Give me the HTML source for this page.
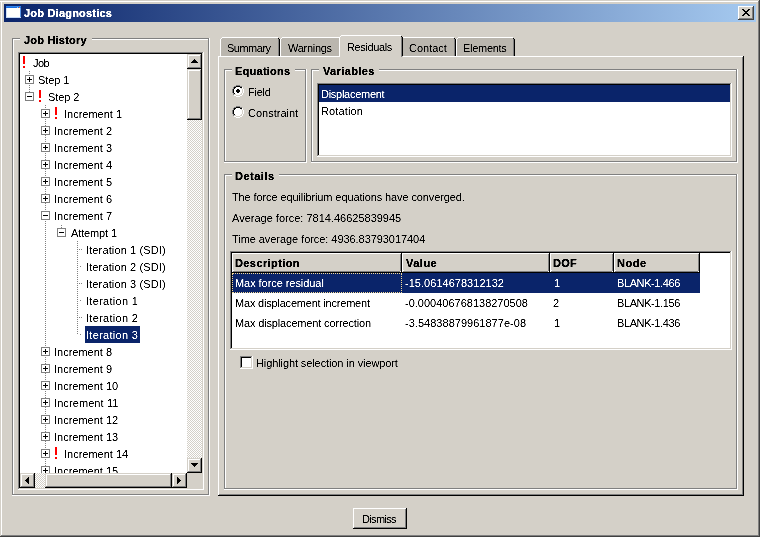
<!DOCTYPE html>
<html><head><meta charset="utf-8"><title>Job Diagnostics</title>
<style>
html,body{margin:0;padding:0}
body{width:760px;height:537px;background:#d4d0c8;position:relative;overflow:hidden;
 font-family:"Liberation Sans",sans-serif;font-size:11px;color:#000}
i,svg,.t,.clip{position:absolute;display:block}
.clip{overflow:hidden}
.t{white-space:nowrap;line-height:13px;height:13px;font-style:normal;filter:url(#tb)}
.dv{width:1px;background-image:linear-gradient(to bottom,#808080 50%,transparent 50%);background-size:1px 2px}
.dh{height:1px;background-image:linear-gradient(to right,#808080 50%,transparent 50%);background-size:2px 1px}
.focus{border:1px dotted #f5db95;box-sizing:content-box}
</style></head>
<body>
<svg width="0" height="0" style="left:0;top:0"><defs><pattern id="dz" width="2" height="2" patternUnits="userSpaceOnUse"><rect width="2" height="2" fill="#fff"/><rect width="1" height="1" fill="#d4d0c8"/><rect x="1" y="1" width="1" height="1" fill="#d4d0c8"/></pattern><filter id="tb" x="-2%" y="-10%" width="104%" height="120%" color-interpolation-filters="sRGB"><feComponentTransfer><feFuncA type="linear" slope="2" intercept="-0.45"/></feComponentTransfer></filter><filter id="tc" x="-2%" y="-10%" width="104%" height="120%" color-interpolation-filters="sRGB"><feComponentTransfer><feFuncA type="linear" slope="2.2" intercept="-0.2"/></feComponentTransfer></filter></defs></svg>
<i style="left:0px;top:1px;width:760px;height:1px;background:#ffffff;"></i>
<i style="left:1px;top:1px;width:1px;height:535px;background:#ffffff;"></i>
<i style="left:0px;top:536px;width:760px;height:1px;background:#404040;"></i>
<i style="left:759px;top:0px;width:1px;height:537px;background:#404040;"></i>
<i style="left:1px;top:535px;width:758px;height:1px;background:#808080;"></i>
<i style="left:758px;top:1px;width:1px;height:535px;background:#808080;"></i>
<i style="left:4px;top:4px;width:752px;height:18px;background:;background:linear-gradient(to right,#0a246a,#a6caf0);"></i>
<svg style="left:6px;top:6px" width="15" height="12" viewBox="0 0 15 12" shape-rendering="crispEdges"><rect width="15" height="12" fill="#fffffb"/><rect width="15" height="2" fill="#1b6ee0"/><rect width="15" height="1" fill="#2f86f0"/><rect x="13" y="1" width="1" height="1" fill="#e8703a"/><rect x="11" y="1" width="1" height="1" fill="#9cc4f4"/><rect x="0" y="2" width="1" height="10" fill="#cfe0f8"/><rect x="14" y="2" width="1" height="10" fill="#5a96e6"/><rect x="0" y="11" width="15" height="1" fill="#c8dcf6"/></svg>
<span class="t" style="left:24px;top:7px;font-weight:bold;filter:url(#tc);color:#fff;letter-spacing:0.214px;">Job Diagnostics</span>
<i style="left:738px;top:6px;width:16px;height:14px;background:#d4d0c8;"></i>
<i style="left:738px;top:6px;width:16px;height:1px;background:#ffffff;"></i>
<i style="left:738px;top:6px;width:1px;height:14px;background:#ffffff;"></i>
<i style="left:738px;top:19px;width:16px;height:1px;background:#404040;"></i>
<i style="left:753px;top:6px;width:1px;height:14px;background:#404040;"></i>
<i style="left:739px;top:18px;width:14px;height:1px;background:#808080;"></i>
<i style="left:752px;top:7px;width:1px;height:12px;background:#808080;"></i>
<svg style="left:742px;top:9px" width="8" height="7" viewBox="0 0 8 7" shape-rendering="crispEdges"><path d="M0 0h2v1h-2zM6 0h2v1h-2zM1 1h2v1h-2zM5 1h2v1h-2zM2 2h4v1h-4zM3 3h2v1h-2zM2 4h4v1h-4zM1 5h2v1h-2zM5 5h2v1h-2zM0 6h2v1h-2zM6 6h2v1h-2z" fill="#000"/></svg>
<i style="left:12px;top:38px;width:198px;height:1px;background:#808080;"></i>
<i style="left:12px;top:38px;width:1px;height:458px;background:#808080;"></i>
<i style="left:12px;top:495px;width:198px;height:1px;background:#ffffff;"></i>
<i style="left:209px;top:38px;width:1px;height:458px;background:#ffffff;"></i>
<i style="left:13px;top:494px;width:196px;height:1px;background:#808080;"></i>
<i style="left:208px;top:39px;width:1px;height:456px;background:#808080;"></i>
<i style="left:13px;top:39px;width:195px;height:1px;background:#ffffff;"></i>
<i style="left:13px;top:39px;width:1px;height:455px;background:#ffffff;"></i>
<i style="left:20px;top:38px;width:72px;height:2px;background:#d4d0c8;"></i>
<span class="t" style="left:24px;top:34px;font-weight:bold;filter:url(#tc);letter-spacing:0.200px;">Job History</span>
<i style="left:20px;top:54px;width:182px;height:434px;background:#ffffff;"></i>
<i style="left:18px;top:52px;width:185px;height:1px;background:#808080;"></i>
<i style="left:18px;top:52px;width:1px;height:437px;background:#808080;"></i>
<i style="left:18px;top:489px;width:186px;height:1px;background:#ffffff;"></i>
<i style="left:203px;top:52px;width:1px;height:438px;background:#ffffff;"></i>
<i style="left:19px;top:53px;width:183px;height:1px;background:#000000;"></i>
<i style="left:19px;top:53px;width:1px;height:435px;background:#000000;"></i>
<i style="left:19px;top:488px;width:184px;height:1px;background:#d4d0c8;"></i>
<i style="left:202px;top:53px;width:1px;height:436px;background:#d4d0c8;"></i>
<div class="clip" style="left:0;top:0;width:187px;height:473px">
<i class="dv" style="left:29px;top:71px;height:3px"></i>
<i class="dv" style="left:29px;top:85px;height:7px"></i>
<i class="dv" style="left:45px;top:105px;height:3px"></i>
<i class="dv" style="left:45px;top:119px;height:7px"></i>
<i class="dv" style="left:45px;top:135px;height:7px"></i>
<i class="dv" style="left:45px;top:153px;height:7px"></i>
<i class="dv" style="left:45px;top:169px;height:7px"></i>
<i class="dv" style="left:45px;top:187px;height:7px"></i>
<i class="dv" style="left:45px;top:203px;height:7px"></i>
<i class="dv" style="left:45px;top:221px;height:125px"></i>
<i class="dv" style="left:45px;top:357px;height:7px"></i>
<i class="dv" style="left:45px;top:373px;height:7px"></i>
<i class="dv" style="left:45px;top:391px;height:7px"></i>
<i class="dv" style="left:45px;top:407px;height:7px"></i>
<i class="dv" style="left:45px;top:425px;height:7px"></i>
<i class="dv" style="left:45px;top:441px;height:7px"></i>
<i class="dv" style="left:45px;top:459px;height:7px"></i>
<i class="dv" style="left:45px;top:475px;height:5px"></i>
<i class="dv" style="left:61px;top:225px;height:3px"></i>
<i class="dv" style="left:77px;top:241px;height:93px"></i>
<i class="dh" style="left:79px;top:249px;width:3px"></i>
<i class="dh" style="left:80px;top:266px;width:1px"></i>
<i class="dh" style="left:79px;top:283px;width:3px"></i>
<i class="dh" style="left:80px;top:300px;width:1px"></i>
<i class="dh" style="left:79px;top:317px;width:3px"></i>
<i class="dh" style="left:80px;top:334px;width:1px"></i>
<i style="left:23px;top:56px;width:2px;height:8px;background:#ff0000;"></i>
<i style="left:23px;top:66px;width:2px;height:2px;background:#ff0000;"></i>
<span class="t" style="left:33px;top:57px;letter-spacing:-0.500px;">Job</span>
<i style="left:25px;top:75px;width:9px;height:9px;background:#ffffff;"></i>
<i style="left:25px;top:75px;width:9px;height:1px;background:#808080;"></i>
<i style="left:25px;top:75px;width:1px;height:9px;background:#808080;"></i>
<i style="left:25px;top:83px;width:9px;height:1px;background:#808080;"></i>
<i style="left:33px;top:75px;width:1px;height:9px;background:#808080;"></i>
<i style="left:27px;top:79px;width:5px;height:1px;background:#000000;"></i>
<i style="left:29px;top:77px;width:1px;height:5px;background:#000000;"></i>
<span class="t" style="left:38px;top:74px;letter-spacing:-0.100px;">Step 1</span>
<i style="left:25px;top:92px;width:9px;height:9px;background:#ffffff;"></i>
<i style="left:25px;top:92px;width:9px;height:1px;background:#808080;"></i>
<i style="left:25px;top:92px;width:1px;height:9px;background:#808080;"></i>
<i style="left:25px;top:100px;width:9px;height:1px;background:#808080;"></i>
<i style="left:33px;top:92px;width:1px;height:9px;background:#808080;"></i>
<i style="left:27px;top:96px;width:5px;height:1px;background:#000000;"></i>
<i style="left:39px;top:90px;width:2px;height:8px;background:#ff0000;"></i>
<i style="left:39px;top:100px;width:2px;height:2px;background:#ff0000;"></i>
<span class="t" style="left:48px;top:91px;letter-spacing:-0.100px;">Step 2</span>
<i style="left:41px;top:109px;width:9px;height:9px;background:#ffffff;"></i>
<i style="left:41px;top:109px;width:9px;height:1px;background:#808080;"></i>
<i style="left:41px;top:109px;width:1px;height:9px;background:#808080;"></i>
<i style="left:41px;top:117px;width:9px;height:1px;background:#808080;"></i>
<i style="left:49px;top:109px;width:1px;height:9px;background:#808080;"></i>
<i style="left:43px;top:113px;width:5px;height:1px;background:#000000;"></i>
<i style="left:45px;top:111px;width:1px;height:5px;background:#000000;"></i>
<i style="left:55px;top:107px;width:2px;height:8px;background:#ff0000;"></i>
<i style="left:55px;top:117px;width:2px;height:2px;background:#ff0000;"></i>
<span class="t" style="left:64px;top:108px;">Increment 1</span>
<i style="left:41px;top:126px;width:9px;height:9px;background:#ffffff;"></i>
<i style="left:41px;top:126px;width:9px;height:1px;background:#808080;"></i>
<i style="left:41px;top:126px;width:1px;height:9px;background:#808080;"></i>
<i style="left:41px;top:134px;width:9px;height:1px;background:#808080;"></i>
<i style="left:49px;top:126px;width:1px;height:9px;background:#808080;"></i>
<i style="left:43px;top:130px;width:5px;height:1px;background:#000000;"></i>
<i style="left:45px;top:128px;width:1px;height:5px;background:#000000;"></i>
<span class="t" style="left:54px;top:125px;">Increment 2</span>
<i style="left:41px;top:143px;width:9px;height:9px;background:#ffffff;"></i>
<i style="left:41px;top:143px;width:9px;height:1px;background:#808080;"></i>
<i style="left:41px;top:143px;width:1px;height:9px;background:#808080;"></i>
<i style="left:41px;top:151px;width:9px;height:1px;background:#808080;"></i>
<i style="left:49px;top:143px;width:1px;height:9px;background:#808080;"></i>
<i style="left:43px;top:147px;width:5px;height:1px;background:#000000;"></i>
<i style="left:45px;top:145px;width:1px;height:5px;background:#000000;"></i>
<span class="t" style="left:54px;top:142px;">Increment 3</span>
<i style="left:41px;top:160px;width:9px;height:9px;background:#ffffff;"></i>
<i style="left:41px;top:160px;width:9px;height:1px;background:#808080;"></i>
<i style="left:41px;top:160px;width:1px;height:9px;background:#808080;"></i>
<i style="left:41px;top:168px;width:9px;height:1px;background:#808080;"></i>
<i style="left:49px;top:160px;width:1px;height:9px;background:#808080;"></i>
<i style="left:43px;top:164px;width:5px;height:1px;background:#000000;"></i>
<i style="left:45px;top:162px;width:1px;height:5px;background:#000000;"></i>
<span class="t" style="left:54px;top:159px;">Increment 4</span>
<i style="left:41px;top:177px;width:9px;height:9px;background:#ffffff;"></i>
<i style="left:41px;top:177px;width:9px;height:1px;background:#808080;"></i>
<i style="left:41px;top:177px;width:1px;height:9px;background:#808080;"></i>
<i style="left:41px;top:185px;width:9px;height:1px;background:#808080;"></i>
<i style="left:49px;top:177px;width:1px;height:9px;background:#808080;"></i>
<i style="left:43px;top:181px;width:5px;height:1px;background:#000000;"></i>
<i style="left:45px;top:179px;width:1px;height:5px;background:#000000;"></i>
<span class="t" style="left:54px;top:176px;">Increment 5</span>
<i style="left:41px;top:194px;width:9px;height:9px;background:#ffffff;"></i>
<i style="left:41px;top:194px;width:9px;height:1px;background:#808080;"></i>
<i style="left:41px;top:194px;width:1px;height:9px;background:#808080;"></i>
<i style="left:41px;top:202px;width:9px;height:1px;background:#808080;"></i>
<i style="left:49px;top:194px;width:1px;height:9px;background:#808080;"></i>
<i style="left:43px;top:198px;width:5px;height:1px;background:#000000;"></i>
<i style="left:45px;top:196px;width:1px;height:5px;background:#000000;"></i>
<span class="t" style="left:54px;top:193px;">Increment 6</span>
<i style="left:41px;top:211px;width:9px;height:9px;background:#ffffff;"></i>
<i style="left:41px;top:211px;width:9px;height:1px;background:#808080;"></i>
<i style="left:41px;top:211px;width:1px;height:9px;background:#808080;"></i>
<i style="left:41px;top:219px;width:9px;height:1px;background:#808080;"></i>
<i style="left:49px;top:211px;width:1px;height:9px;background:#808080;"></i>
<i style="left:43px;top:215px;width:5px;height:1px;background:#000000;"></i>
<span class="t" style="left:54px;top:210px;">Increment 7</span>
<i style="left:57px;top:228px;width:9px;height:9px;background:#ffffff;"></i>
<i style="left:57px;top:228px;width:9px;height:1px;background:#808080;"></i>
<i style="left:57px;top:228px;width:1px;height:9px;background:#808080;"></i>
<i style="left:57px;top:236px;width:9px;height:1px;background:#808080;"></i>
<i style="left:65px;top:228px;width:1px;height:9px;background:#808080;"></i>
<i style="left:59px;top:232px;width:5px;height:1px;background:#000000;"></i>
<span class="t" style="left:71px;top:227px;letter-spacing:-0.125px;">Attempt 1</span>
<span class="t" style="left:86px;top:244px;letter-spacing:0.125px;">Iteration 1 (SDI)</span>
<span class="t" style="left:86px;top:261px;letter-spacing:0.125px;">Iteration 2 (SDI)</span>
<span class="t" style="left:86px;top:278px;letter-spacing:0.125px;">Iteration 3 (SDI)</span>
<span class="t" style="left:86px;top:295px;letter-spacing:0.300px;">Iteration 1</span>
<span class="t" style="left:86px;top:312px;letter-spacing:0.300px;">Iteration 2</span>
<i style="left:85px;top:326px;width:55px;height:17px;background:#0a246a;"></i>
<span class="t" style="left:86px;top:329px;color:#fff;letter-spacing:0.300px;">Iteration 3</span>
<i style="left:41px;top:347px;width:9px;height:9px;background:#ffffff;"></i>
<i style="left:41px;top:347px;width:9px;height:1px;background:#808080;"></i>
<i style="left:41px;top:347px;width:1px;height:9px;background:#808080;"></i>
<i style="left:41px;top:355px;width:9px;height:1px;background:#808080;"></i>
<i style="left:49px;top:347px;width:1px;height:9px;background:#808080;"></i>
<i style="left:43px;top:351px;width:5px;height:1px;background:#000000;"></i>
<i style="left:45px;top:349px;width:1px;height:5px;background:#000000;"></i>
<span class="t" style="left:54px;top:346px;">Increment 8</span>
<i style="left:41px;top:364px;width:9px;height:9px;background:#ffffff;"></i>
<i style="left:41px;top:364px;width:9px;height:1px;background:#808080;"></i>
<i style="left:41px;top:364px;width:1px;height:9px;background:#808080;"></i>
<i style="left:41px;top:372px;width:9px;height:1px;background:#808080;"></i>
<i style="left:49px;top:364px;width:1px;height:9px;background:#808080;"></i>
<i style="left:43px;top:368px;width:5px;height:1px;background:#000000;"></i>
<i style="left:45px;top:366px;width:1px;height:5px;background:#000000;"></i>
<span class="t" style="left:54px;top:363px;">Increment 9</span>
<i style="left:41px;top:381px;width:9px;height:9px;background:#ffffff;"></i>
<i style="left:41px;top:381px;width:9px;height:1px;background:#808080;"></i>
<i style="left:41px;top:381px;width:1px;height:9px;background:#808080;"></i>
<i style="left:41px;top:389px;width:9px;height:1px;background:#808080;"></i>
<i style="left:49px;top:381px;width:1px;height:9px;background:#808080;"></i>
<i style="left:43px;top:385px;width:5px;height:1px;background:#000000;"></i>
<i style="left:45px;top:383px;width:1px;height:5px;background:#000000;"></i>
<span class="t" style="left:54px;top:380px;">Increment 10</span>
<i style="left:41px;top:398px;width:9px;height:9px;background:#ffffff;"></i>
<i style="left:41px;top:398px;width:9px;height:1px;background:#808080;"></i>
<i style="left:41px;top:398px;width:1px;height:9px;background:#808080;"></i>
<i style="left:41px;top:406px;width:9px;height:1px;background:#808080;"></i>
<i style="left:49px;top:398px;width:1px;height:9px;background:#808080;"></i>
<i style="left:43px;top:402px;width:5px;height:1px;background:#000000;"></i>
<i style="left:45px;top:400px;width:1px;height:5px;background:#000000;"></i>
<span class="t" style="left:54px;top:397px;letter-spacing:0.091px;">Increment 11</span>
<i style="left:41px;top:415px;width:9px;height:9px;background:#ffffff;"></i>
<i style="left:41px;top:415px;width:9px;height:1px;background:#808080;"></i>
<i style="left:41px;top:415px;width:1px;height:9px;background:#808080;"></i>
<i style="left:41px;top:423px;width:9px;height:1px;background:#808080;"></i>
<i style="left:49px;top:415px;width:1px;height:9px;background:#808080;"></i>
<i style="left:43px;top:419px;width:5px;height:1px;background:#000000;"></i>
<i style="left:45px;top:417px;width:1px;height:5px;background:#000000;"></i>
<span class="t" style="left:54px;top:414px;">Increment 12</span>
<i style="left:41px;top:432px;width:9px;height:9px;background:#ffffff;"></i>
<i style="left:41px;top:432px;width:9px;height:1px;background:#808080;"></i>
<i style="left:41px;top:432px;width:1px;height:9px;background:#808080;"></i>
<i style="left:41px;top:440px;width:9px;height:1px;background:#808080;"></i>
<i style="left:49px;top:432px;width:1px;height:9px;background:#808080;"></i>
<i style="left:43px;top:436px;width:5px;height:1px;background:#000000;"></i>
<i style="left:45px;top:434px;width:1px;height:5px;background:#000000;"></i>
<span class="t" style="left:54px;top:431px;">Increment 13</span>
<i style="left:41px;top:449px;width:9px;height:9px;background:#ffffff;"></i>
<i style="left:41px;top:449px;width:9px;height:1px;background:#808080;"></i>
<i style="left:41px;top:449px;width:1px;height:9px;background:#808080;"></i>
<i style="left:41px;top:457px;width:9px;height:1px;background:#808080;"></i>
<i style="left:49px;top:449px;width:1px;height:9px;background:#808080;"></i>
<i style="left:43px;top:453px;width:5px;height:1px;background:#000000;"></i>
<i style="left:45px;top:451px;width:1px;height:5px;background:#000000;"></i>
<i style="left:55px;top:447px;width:2px;height:8px;background:#ff0000;"></i>
<i style="left:55px;top:457px;width:2px;height:2px;background:#ff0000;"></i>
<span class="t" style="left:64px;top:448px;">Increment 14</span>
<i style="left:41px;top:466px;width:9px;height:9px;background:#ffffff;"></i>
<i style="left:41px;top:466px;width:9px;height:1px;background:#808080;"></i>
<i style="left:41px;top:466px;width:1px;height:9px;background:#808080;"></i>
<i style="left:41px;top:474px;width:9px;height:1px;background:#808080;"></i>
<i style="left:49px;top:466px;width:1px;height:9px;background:#808080;"></i>
<i style="left:43px;top:470px;width:5px;height:1px;background:#000000;"></i>
<i style="left:45px;top:468px;width:1px;height:5px;background:#000000;"></i>
<span class="t" style="left:54px;top:465px;">Increment 15</span>
</div>
<svg style="left:187px;top:69px" width="15" height="389" shape-rendering="crispEdges"><rect width="15" height="389" fill="url(#dz)"/></svg>
<i style="left:187px;top:54px;width:15px;height:15px;background:#d4d0c8;"></i>
<i style="left:187px;top:68px;width:15px;height:1px;background:#000000;"></i>
<i style="left:201px;top:54px;width:1px;height:15px;background:#000000;"></i>
<i style="left:187px;top:54px;width:14px;height:1px;background:#d4d0c8;"></i>
<i style="left:187px;top:54px;width:1px;height:14px;background:#d4d0c8;"></i>
<i style="left:188px;top:55px;width:12px;height:1px;background:#ffffff;"></i>
<i style="left:188px;top:55px;width:1px;height:12px;background:#ffffff;"></i>
<i style="left:188px;top:67px;width:13px;height:1px;background:#808080;"></i>
<i style="left:200px;top:55px;width:1px;height:13px;background:#808080;"></i>
<i style="left:194px;top:59px;width:1px;height:1px;background:#000000;"></i>
<i style="left:193px;top:60px;width:3px;height:1px;background:#000000;"></i>
<i style="left:192px;top:61px;width:5px;height:1px;background:#000000;"></i>
<i style="left:191px;top:62px;width:7px;height:1px;background:#000000;"></i>
<i style="left:187px;top:69px;width:15px;height:51px;background:#d4d0c8;"></i>
<i style="left:187px;top:119px;width:15px;height:1px;background:#000000;"></i>
<i style="left:201px;top:69px;width:1px;height:51px;background:#000000;"></i>
<i style="left:187px;top:69px;width:14px;height:1px;background:#d4d0c8;"></i>
<i style="left:187px;top:69px;width:1px;height:50px;background:#d4d0c8;"></i>
<i style="left:188px;top:70px;width:12px;height:1px;background:#ffffff;"></i>
<i style="left:188px;top:70px;width:1px;height:48px;background:#ffffff;"></i>
<i style="left:188px;top:118px;width:13px;height:1px;background:#808080;"></i>
<i style="left:200px;top:70px;width:1px;height:49px;background:#808080;"></i>
<i style="left:187px;top:458px;width:15px;height:15px;background:#d4d0c8;"></i>
<i style="left:187px;top:472px;width:15px;height:1px;background:#000000;"></i>
<i style="left:201px;top:458px;width:1px;height:15px;background:#000000;"></i>
<i style="left:187px;top:458px;width:14px;height:1px;background:#d4d0c8;"></i>
<i style="left:187px;top:458px;width:1px;height:14px;background:#d4d0c8;"></i>
<i style="left:188px;top:459px;width:12px;height:1px;background:#ffffff;"></i>
<i style="left:188px;top:459px;width:1px;height:12px;background:#ffffff;"></i>
<i style="left:188px;top:471px;width:13px;height:1px;background:#808080;"></i>
<i style="left:200px;top:459px;width:1px;height:13px;background:#808080;"></i>
<i style="left:194px;top:466px;width:1px;height:1px;background:#000000;"></i>
<i style="left:193px;top:465px;width:3px;height:1px;background:#000000;"></i>
<i style="left:192px;top:464px;width:5px;height:1px;background:#000000;"></i>
<i style="left:191px;top:463px;width:7px;height:1px;background:#000000;"></i>
<i style="left:187px;top:473px;width:15px;height:15px;background:#d4d0c8;"></i>
<svg style="left:35px;top:473px" width="137" height="15" shape-rendering="crispEdges"><rect width="137" height="15" fill="url(#dz)"/></svg>
<i style="left:20px;top:473px;width:15px;height:15px;background:#d4d0c8;"></i>
<i style="left:20px;top:487px;width:15px;height:1px;background:#000000;"></i>
<i style="left:34px;top:473px;width:1px;height:15px;background:#000000;"></i>
<i style="left:20px;top:473px;width:14px;height:1px;background:#d4d0c8;"></i>
<i style="left:20px;top:473px;width:1px;height:14px;background:#d4d0c8;"></i>
<i style="left:21px;top:474px;width:12px;height:1px;background:#ffffff;"></i>
<i style="left:21px;top:474px;width:1px;height:12px;background:#ffffff;"></i>
<i style="left:21px;top:486px;width:13px;height:1px;background:#808080;"></i>
<i style="left:33px;top:474px;width:1px;height:13px;background:#808080;"></i>
<i style="left:25px;top:480px;width:1px;height:1px;background:#000000;"></i>
<i style="left:26px;top:479px;width:1px;height:3px;background:#000000;"></i>
<i style="left:27px;top:478px;width:1px;height:5px;background:#000000;"></i>
<i style="left:28px;top:477px;width:1px;height:7px;background:#000000;"></i>
<i style="left:45px;top:473px;width:127px;height:15px;background:#d4d0c8;"></i>
<i style="left:45px;top:487px;width:127px;height:1px;background:#000000;"></i>
<i style="left:171px;top:473px;width:1px;height:15px;background:#000000;"></i>
<i style="left:45px;top:473px;width:126px;height:1px;background:#d4d0c8;"></i>
<i style="left:45px;top:473px;width:1px;height:14px;background:#d4d0c8;"></i>
<i style="left:46px;top:474px;width:124px;height:1px;background:#ffffff;"></i>
<i style="left:46px;top:474px;width:1px;height:12px;background:#ffffff;"></i>
<i style="left:46px;top:486px;width:125px;height:1px;background:#808080;"></i>
<i style="left:170px;top:474px;width:1px;height:13px;background:#808080;"></i>
<i style="left:172px;top:473px;width:15px;height:15px;background:#d4d0c8;"></i>
<i style="left:172px;top:487px;width:15px;height:1px;background:#000000;"></i>
<i style="left:186px;top:473px;width:1px;height:15px;background:#000000;"></i>
<i style="left:172px;top:473px;width:14px;height:1px;background:#d4d0c8;"></i>
<i style="left:172px;top:473px;width:1px;height:14px;background:#d4d0c8;"></i>
<i style="left:173px;top:474px;width:12px;height:1px;background:#ffffff;"></i>
<i style="left:173px;top:474px;width:1px;height:12px;background:#ffffff;"></i>
<i style="left:173px;top:486px;width:13px;height:1px;background:#808080;"></i>
<i style="left:185px;top:474px;width:1px;height:13px;background:#808080;"></i>
<i style="left:180px;top:480px;width:1px;height:1px;background:#000000;"></i>
<i style="left:179px;top:479px;width:1px;height:3px;background:#000000;"></i>
<i style="left:178px;top:478px;width:1px;height:5px;background:#000000;"></i>
<i style="left:177px;top:477px;width:1px;height:7px;background:#000000;"></i>
<i style="left:218px;top:56px;width:525px;height:1px;background:#ffffff;"></i>
<i style="left:218px;top:56px;width:1px;height:439px;background:#ffffff;"></i>
<i style="left:218px;top:495px;width:526px;height:1px;background:#000000;"></i>
<i style="left:743px;top:56px;width:1px;height:440px;background:#000000;"></i>
<i style="left:219px;top:494px;width:524px;height:1px;background:#808080;"></i>
<i style="left:742px;top:57px;width:1px;height:438px;background:#808080;"></i>
<i style="left:220px;top:37px;width:60px;height:19px;background:#bab6ae;"></i>
<i style="left:220px;top:37px;width:2px;height:1px;background:#d4d0c8;"></i>
<i style="left:220px;top:38px;width:1px;height:1px;background:#d4d0c8;"></i>
<i style="left:278px;top:37px;width:2px;height:1px;background:#d4d0c8;"></i>
<i style="left:279px;top:38px;width:1px;height:1px;background:#d4d0c8;"></i>
<i style="left:220px;top:39px;width:1px;height:17px;background:#ffffff;"></i>
<i style="left:222px;top:37px;width:56px;height:1px;background:#ffffff;"></i>
<i style="left:221px;top:38px;width:1px;height:1px;background:#ffffff;"></i>
<i style="left:278px;top:39px;width:1px;height:17px;background:#808080;"></i>
<i style="left:279px;top:39px;width:1px;height:17px;background:#000000;"></i>
<i style="left:278px;top:38px;width:1px;height:1px;background:#000000;"></i>
<span class="t" style="left:227px;top:42px;letter-spacing:-0.500px;">Summary</span>
<i style="left:280px;top:37px;width:61px;height:19px;background:#bab6ae;"></i>
<i style="left:280px;top:37px;width:2px;height:1px;background:#d4d0c8;"></i>
<i style="left:280px;top:38px;width:1px;height:1px;background:#d4d0c8;"></i>
<i style="left:339px;top:37px;width:2px;height:1px;background:#d4d0c8;"></i>
<i style="left:340px;top:38px;width:1px;height:1px;background:#d4d0c8;"></i>
<i style="left:280px;top:39px;width:1px;height:17px;background:#ffffff;"></i>
<i style="left:282px;top:37px;width:57px;height:1px;background:#ffffff;"></i>
<i style="left:281px;top:38px;width:1px;height:1px;background:#ffffff;"></i>
<i style="left:339px;top:39px;width:1px;height:17px;background:#808080;"></i>
<i style="left:340px;top:39px;width:1px;height:17px;background:#000000;"></i>
<i style="left:339px;top:38px;width:1px;height:1px;background:#000000;"></i>
<span class="t" style="left:288px;top:42px;letter-spacing:-0.286px;">Warnings</span>
<i style="left:401px;top:37px;width:55px;height:19px;background:#bab6ae;"></i>
<i style="left:401px;top:37px;width:2px;height:1px;background:#d4d0c8;"></i>
<i style="left:401px;top:38px;width:1px;height:1px;background:#d4d0c8;"></i>
<i style="left:454px;top:37px;width:2px;height:1px;background:#d4d0c8;"></i>
<i style="left:455px;top:38px;width:1px;height:1px;background:#d4d0c8;"></i>
<i style="left:401px;top:39px;width:1px;height:17px;background:#ffffff;"></i>
<i style="left:403px;top:37px;width:51px;height:1px;background:#ffffff;"></i>
<i style="left:402px;top:38px;width:1px;height:1px;background:#ffffff;"></i>
<i style="left:454px;top:39px;width:1px;height:17px;background:#808080;"></i>
<i style="left:455px;top:39px;width:1px;height:17px;background:#000000;"></i>
<i style="left:454px;top:38px;width:1px;height:1px;background:#000000;"></i>
<span class="t" style="left:409px;top:42px;">Contact</span>
<i style="left:456px;top:37px;width:59px;height:19px;background:#bab6ae;"></i>
<i style="left:456px;top:37px;width:2px;height:1px;background:#d4d0c8;"></i>
<i style="left:456px;top:38px;width:1px;height:1px;background:#d4d0c8;"></i>
<i style="left:513px;top:37px;width:2px;height:1px;background:#d4d0c8;"></i>
<i style="left:514px;top:38px;width:1px;height:1px;background:#d4d0c8;"></i>
<i style="left:456px;top:39px;width:1px;height:17px;background:#ffffff;"></i>
<i style="left:458px;top:37px;width:55px;height:1px;background:#ffffff;"></i>
<i style="left:457px;top:38px;width:1px;height:1px;background:#ffffff;"></i>
<i style="left:513px;top:39px;width:1px;height:17px;background:#808080;"></i>
<i style="left:514px;top:39px;width:1px;height:17px;background:#000000;"></i>
<i style="left:513px;top:38px;width:1px;height:1px;background:#000000;"></i>
<span class="t" style="left:463px;top:42px;letter-spacing:-0.286px;">Elements</span>
<i style="left:339px;top:35px;width:64px;height:22px;background:#d4d0c8;"></i>
<i style="left:339px;top:37px;width:1px;height:20px;background:#ffffff;"></i>
<i style="left:341px;top:35px;width:60px;height:1px;background:#ffffff;"></i>
<i style="left:340px;top:36px;width:1px;height:1px;background:#ffffff;"></i>
<i style="left:401px;top:37px;width:1px;height:20px;background:#808080;"></i>
<i style="left:402px;top:37px;width:1px;height:19px;background:#000000;"></i>
<i style="left:401px;top:36px;width:1px;height:1px;background:#000000;"></i>
<span class="t" style="left:347px;top:41px;letter-spacing:-0.375px;">Residuals</span>
<i style="left:224px;top:69px;width:83px;height:1px;background:#808080;"></i>
<i style="left:224px;top:69px;width:1px;height:94px;background:#808080;"></i>
<i style="left:224px;top:162px;width:83px;height:1px;background:#ffffff;"></i>
<i style="left:306px;top:69px;width:1px;height:94px;background:#ffffff;"></i>
<i style="left:225px;top:161px;width:81px;height:1px;background:#808080;"></i>
<i style="left:305px;top:70px;width:1px;height:92px;background:#808080;"></i>
<i style="left:225px;top:70px;width:80px;height:1px;background:#ffffff;"></i>
<i style="left:225px;top:70px;width:1px;height:91px;background:#ffffff;"></i>
<i style="left:232px;top:69px;width:63px;height:2px;background:#d4d0c8;"></i>
<span class="t" style="left:235px;top:65px;font-weight:bold;filter:url(#tc);letter-spacing:0.250px;">Equations</span>
<i style="left:311px;top:69px;width:427px;height:1px;background:#808080;"></i>
<i style="left:311px;top:69px;width:1px;height:94px;background:#808080;"></i>
<i style="left:311px;top:162px;width:427px;height:1px;background:#ffffff;"></i>
<i style="left:737px;top:69px;width:1px;height:94px;background:#ffffff;"></i>
<i style="left:312px;top:161px;width:425px;height:1px;background:#808080;"></i>
<i style="left:736px;top:70px;width:1px;height:92px;background:#808080;"></i>
<i style="left:312px;top:70px;width:424px;height:1px;background:#ffffff;"></i>
<i style="left:312px;top:70px;width:1px;height:91px;background:#ffffff;"></i>
<i style="left:319px;top:69px;width:60px;height:2px;background:#d4d0c8;"></i>
<span class="t" style="left:323px;top:65px;font-weight:bold;filter:url(#tc);letter-spacing:0.375px;">Variables</span>
<svg style="left:232px;top:85px" width="12" height="12" viewBox="0 0 12 12" shape-rendering="crispEdges"><path d="M4 2h4v1h2v1h1v4h-1v2h-2v1h-4v-1h-2v-2h-1v-4h1v-1h2z" fill="#fff"/><path d="M4 0h4v1h-4zM2 1h2v1h-2zM8 1h2v1h-2zM1 2h1v2h-1zM0 4h1v4h-1zM1 8h1v2h-1z" fill="#808080"/><path d="M4 1h4v1h-4zM2 2h2v1h-2zM8 2h2v1h-2zM2 3h1v1h-1zM1 4h1v4h-1zM2 8h1v1h-1z" fill="#000"/><path d="M10 2h1v2h-1zM11 4h1v4h-1zM10 8h1v2h-1zM8 10h2v1h-2zM2 10h2v1h-2zM4 11h4v1h-4z" fill="#fff"/><path d="M9 3h1v1h-1zM10 4h1v4h-1zM9 8h1v1h-1zM8 9h2v1h-2zM2 9h2v1h-2zM4 10h4v1h-4z" fill="#d4d0c8"/><path d="M5 4h2v1h-2zM4 5h4v2h-4zM5 7h2v1h-2z" fill="#000"/></svg>
<span class="t" style="left:248px;top:86px;letter-spacing:-0.250px;">Field</span>
<svg style="left:232px;top:106px" width="12" height="12" viewBox="0 0 12 12" shape-rendering="crispEdges"><path d="M4 2h4v1h2v1h1v4h-1v2h-2v1h-4v-1h-2v-2h-1v-4h1v-1h2z" fill="#fff"/><path d="M4 0h4v1h-4zM2 1h2v1h-2zM8 1h2v1h-2zM1 2h1v2h-1zM0 4h1v4h-1zM1 8h1v2h-1z" fill="#808080"/><path d="M4 1h4v1h-4zM2 2h2v1h-2zM8 2h2v1h-2zM2 3h1v1h-1zM1 4h1v4h-1zM2 8h1v1h-1z" fill="#000"/><path d="M10 2h1v2h-1zM11 4h1v4h-1zM10 8h1v2h-1zM8 10h2v1h-2zM2 10h2v1h-2zM4 11h4v1h-4z" fill="#fff"/><path d="M9 3h1v1h-1zM10 4h1v4h-1zM9 8h1v1h-1zM8 9h2v1h-2zM2 9h2v1h-2zM4 10h4v1h-4z" fill="#d4d0c8"/></svg>
<span class="t" style="left:248px;top:107px;">Constraint</span>
<i style="left:319px;top:85px;width:411px;height:70px;background:#ffffff;"></i>
<i style="left:317px;top:83px;width:414px;height:1px;background:#808080;"></i>
<i style="left:317px;top:83px;width:1px;height:73px;background:#808080;"></i>
<i style="left:317px;top:156px;width:415px;height:1px;background:#ffffff;"></i>
<i style="left:731px;top:83px;width:1px;height:74px;background:#ffffff;"></i>
<i style="left:318px;top:84px;width:412px;height:1px;background:#000000;"></i>
<i style="left:318px;top:84px;width:1px;height:71px;background:#000000;"></i>
<i style="left:318px;top:155px;width:413px;height:1px;background:#d4d0c8;"></i>
<i style="left:730px;top:84px;width:1px;height:72px;background:#d4d0c8;"></i>
<i style="left:319px;top:85px;width:411px;height:17px;background:#0a246a;"></i>
<span class="t" style="left:321px;top:88px;color:#fff;letter-spacing:-0.273px;">Displacement</span>
<span class="t" style="left:321px;top:105px;letter-spacing:0.143px;">Rotation</span>
<i style="left:224px;top:174px;width:514px;height:1px;background:#808080;"></i>
<i style="left:224px;top:174px;width:1px;height:316px;background:#808080;"></i>
<i style="left:224px;top:489px;width:514px;height:1px;background:#ffffff;"></i>
<i style="left:737px;top:174px;width:1px;height:316px;background:#ffffff;"></i>
<i style="left:225px;top:488px;width:512px;height:1px;background:#808080;"></i>
<i style="left:736px;top:175px;width:1px;height:314px;background:#808080;"></i>
<i style="left:225px;top:175px;width:511px;height:1px;background:#ffffff;"></i>
<i style="left:225px;top:175px;width:1px;height:313px;background:#ffffff;"></i>
<i style="left:232px;top:174px;width:47px;height:2px;background:#d4d0c8;"></i>
<span class="t" style="left:235px;top:170px;font-weight:bold;filter:url(#tc);letter-spacing:0.500px;">Details</span>
<span class="t" style="left:232px;top:191px;letter-spacing:-0.109px;">The force equilibrium equations have converged.</span>
<span class="t" style="left:232px;top:212px;">Average force: 7814.46625839945</span>
<span class="t" style="left:232px;top:233px;letter-spacing:-0.057px;">Time average force: 4936.83793017404</span>
<i style="left:232px;top:253px;width:498px;height:95px;background:#ffffff;"></i>
<i style="left:230px;top:251px;width:501px;height:1px;background:#808080;"></i>
<i style="left:230px;top:251px;width:1px;height:98px;background:#808080;"></i>
<i style="left:230px;top:349px;width:502px;height:1px;background:#ffffff;"></i>
<i style="left:731px;top:251px;width:1px;height:99px;background:#ffffff;"></i>
<i style="left:231px;top:252px;width:499px;height:1px;background:#000000;"></i>
<i style="left:231px;top:252px;width:1px;height:96px;background:#000000;"></i>
<i style="left:231px;top:348px;width:500px;height:1px;background:#d4d0c8;"></i>
<i style="left:730px;top:252px;width:1px;height:97px;background:#d4d0c8;"></i>
<i style="left:232px;top:253px;width:170px;height:20px;background:#d4d0c8;"></i>
<i style="left:232px;top:272px;width:170px;height:1px;background:#000000;"></i>
<i style="left:401px;top:253px;width:1px;height:20px;background:#000000;"></i>
<i style="left:232px;top:253px;width:169px;height:1px;background:#ffffff;"></i>
<i style="left:232px;top:253px;width:1px;height:19px;background:#ffffff;"></i>
<i style="left:233px;top:254px;width:167px;height:1px;background:#d4d0c8;"></i>
<i style="left:233px;top:254px;width:1px;height:17px;background:#d4d0c8;"></i>
<i style="left:233px;top:271px;width:168px;height:1px;background:#808080;"></i>
<i style="left:400px;top:254px;width:1px;height:18px;background:#808080;"></i>
<i style="left:233px;top:270px;width:1px;height:1px;background:#ffffff;"></i>
<i style="left:400px;top:271px;width:1px;height:1px;background:#ffffff;"></i>
<span class="t" style="left:235px;top:257px;font-weight:bold;filter:url(#tc);letter-spacing:0.400px;">Description</span>
<i style="left:402px;top:253px;width:148px;height:20px;background:#d4d0c8;"></i>
<i style="left:402px;top:272px;width:148px;height:1px;background:#000000;"></i>
<i style="left:549px;top:253px;width:1px;height:20px;background:#000000;"></i>
<i style="left:402px;top:253px;width:147px;height:1px;background:#ffffff;"></i>
<i style="left:402px;top:253px;width:1px;height:19px;background:#ffffff;"></i>
<i style="left:403px;top:254px;width:145px;height:1px;background:#d4d0c8;"></i>
<i style="left:403px;top:254px;width:1px;height:17px;background:#d4d0c8;"></i>
<i style="left:403px;top:271px;width:146px;height:1px;background:#808080;"></i>
<i style="left:548px;top:254px;width:1px;height:18px;background:#808080;"></i>
<i style="left:403px;top:270px;width:1px;height:1px;background:#ffffff;"></i>
<i style="left:548px;top:271px;width:1px;height:1px;background:#ffffff;"></i>
<span class="t" style="left:406px;top:257px;font-weight:bold;filter:url(#tc);letter-spacing:0.500px;">Value</span>
<i style="left:550px;top:253px;width:64px;height:20px;background:#d4d0c8;"></i>
<i style="left:550px;top:272px;width:64px;height:1px;background:#000000;"></i>
<i style="left:613px;top:253px;width:1px;height:20px;background:#000000;"></i>
<i style="left:550px;top:253px;width:63px;height:1px;background:#ffffff;"></i>
<i style="left:550px;top:253px;width:1px;height:19px;background:#ffffff;"></i>
<i style="left:551px;top:254px;width:61px;height:1px;background:#d4d0c8;"></i>
<i style="left:551px;top:254px;width:1px;height:17px;background:#d4d0c8;"></i>
<i style="left:551px;top:271px;width:62px;height:1px;background:#808080;"></i>
<i style="left:612px;top:254px;width:1px;height:18px;background:#808080;"></i>
<i style="left:551px;top:270px;width:1px;height:1px;background:#ffffff;"></i>
<i style="left:612px;top:271px;width:1px;height:1px;background:#ffffff;"></i>
<span class="t" style="left:553px;top:257px;font-weight:bold;filter:url(#tc);letter-spacing:0.250px;">DOF</span>
<i style="left:614px;top:253px;width:86px;height:20px;background:#d4d0c8;"></i>
<i style="left:614px;top:272px;width:86px;height:1px;background:#000000;"></i>
<i style="left:699px;top:253px;width:1px;height:20px;background:#000000;"></i>
<i style="left:614px;top:253px;width:85px;height:1px;background:#ffffff;"></i>
<i style="left:614px;top:253px;width:1px;height:19px;background:#ffffff;"></i>
<i style="left:615px;top:254px;width:83px;height:1px;background:#d4d0c8;"></i>
<i style="left:615px;top:254px;width:1px;height:17px;background:#d4d0c8;"></i>
<i style="left:615px;top:271px;width:84px;height:1px;background:#808080;"></i>
<i style="left:698px;top:254px;width:1px;height:18px;background:#808080;"></i>
<i style="left:615px;top:270px;width:1px;height:1px;background:#ffffff;"></i>
<i style="left:698px;top:271px;width:1px;height:1px;background:#ffffff;"></i>
<span class="t" style="left:617px;top:257px;font-weight:bold;filter:url(#tc);letter-spacing:0.500px;">Node</span>
<i style="left:232px;top:273px;width:468px;height:20px;background:#0a246a;"></i>
<i class="focus" style="left:232px;top:273px;width:168px;height:18px"></i>
<span class="t" style="left:235px;top:277px;color:#fff;letter-spacing:-0.059px;">Max force residual</span>
<span class="t" style="left:405px;top:277px;color:#fff;letter-spacing:0.031px;">-15.0614678312132</span>
<span class="t" style="left:554px;top:277px;color:#fff;">1</span>
<span class="t" style="left:617px;top:277px;color:#fff;letter-spacing:-0.400px;">BLANK-1.466</span>
<span class="t" style="left:235px;top:297px;letter-spacing:-0.200px;">Max displacement increment</span>
<span class="t" style="left:405px;top:297px;">-0.000406768138270508</span>
<span class="t" style="left:553px;top:297px;">2</span>
<span class="t" style="left:617px;top:297px;letter-spacing:-0.400px;">BLANK-1.156</span>
<span class="t" style="left:235px;top:317px;letter-spacing:-0.154px;">Max displacement correction</span>
<span class="t" style="left:405px;top:317px;letter-spacing:0.025px;">-3.54838879961877e-08</span>
<span class="t" style="left:554px;top:317px;">1</span>
<span class="t" style="left:617px;top:317px;letter-spacing:-0.400px;">BLANK-1.436</span>
<i style="left:242px;top:358px;width:9px;height:9px;background:#ffffff;"></i>
<i style="left:240px;top:356px;width:12px;height:1px;background:#808080;"></i>
<i style="left:240px;top:356px;width:1px;height:12px;background:#808080;"></i>
<i style="left:240px;top:368px;width:13px;height:1px;background:#ffffff;"></i>
<i style="left:252px;top:356px;width:1px;height:13px;background:#ffffff;"></i>
<i style="left:241px;top:357px;width:10px;height:1px;background:#000000;"></i>
<i style="left:241px;top:357px;width:1px;height:10px;background:#000000;"></i>
<i style="left:241px;top:367px;width:11px;height:1px;background:#d4d0c8;"></i>
<i style="left:251px;top:357px;width:1px;height:11px;background:#d4d0c8;"></i>
<span class="t" style="left:256px;top:357px;letter-spacing:-0.100px;">Highlight selection in viewport</span>
<i style="left:353px;top:508px;width:54px;height:21px;background:#d4d0c8;"></i>
<i style="left:353px;top:528px;width:54px;height:1px;background:#000000;"></i>
<i style="left:406px;top:508px;width:1px;height:21px;background:#000000;"></i>
<i style="left:353px;top:508px;width:53px;height:1px;background:#ffffff;"></i>
<i style="left:353px;top:508px;width:1px;height:20px;background:#ffffff;"></i>
<i style="left:354px;top:509px;width:51px;height:1px;background:#d4d0c8;"></i>
<i style="left:354px;top:509px;width:1px;height:18px;background:#d4d0c8;"></i>
<i style="left:354px;top:527px;width:52px;height:1px;background:#808080;"></i>
<i style="left:405px;top:509px;width:1px;height:19px;background:#808080;"></i>
<span class="t" style="left:362px;top:513px;letter-spacing:-0.667px;">Dismiss</span>
</body></html>
